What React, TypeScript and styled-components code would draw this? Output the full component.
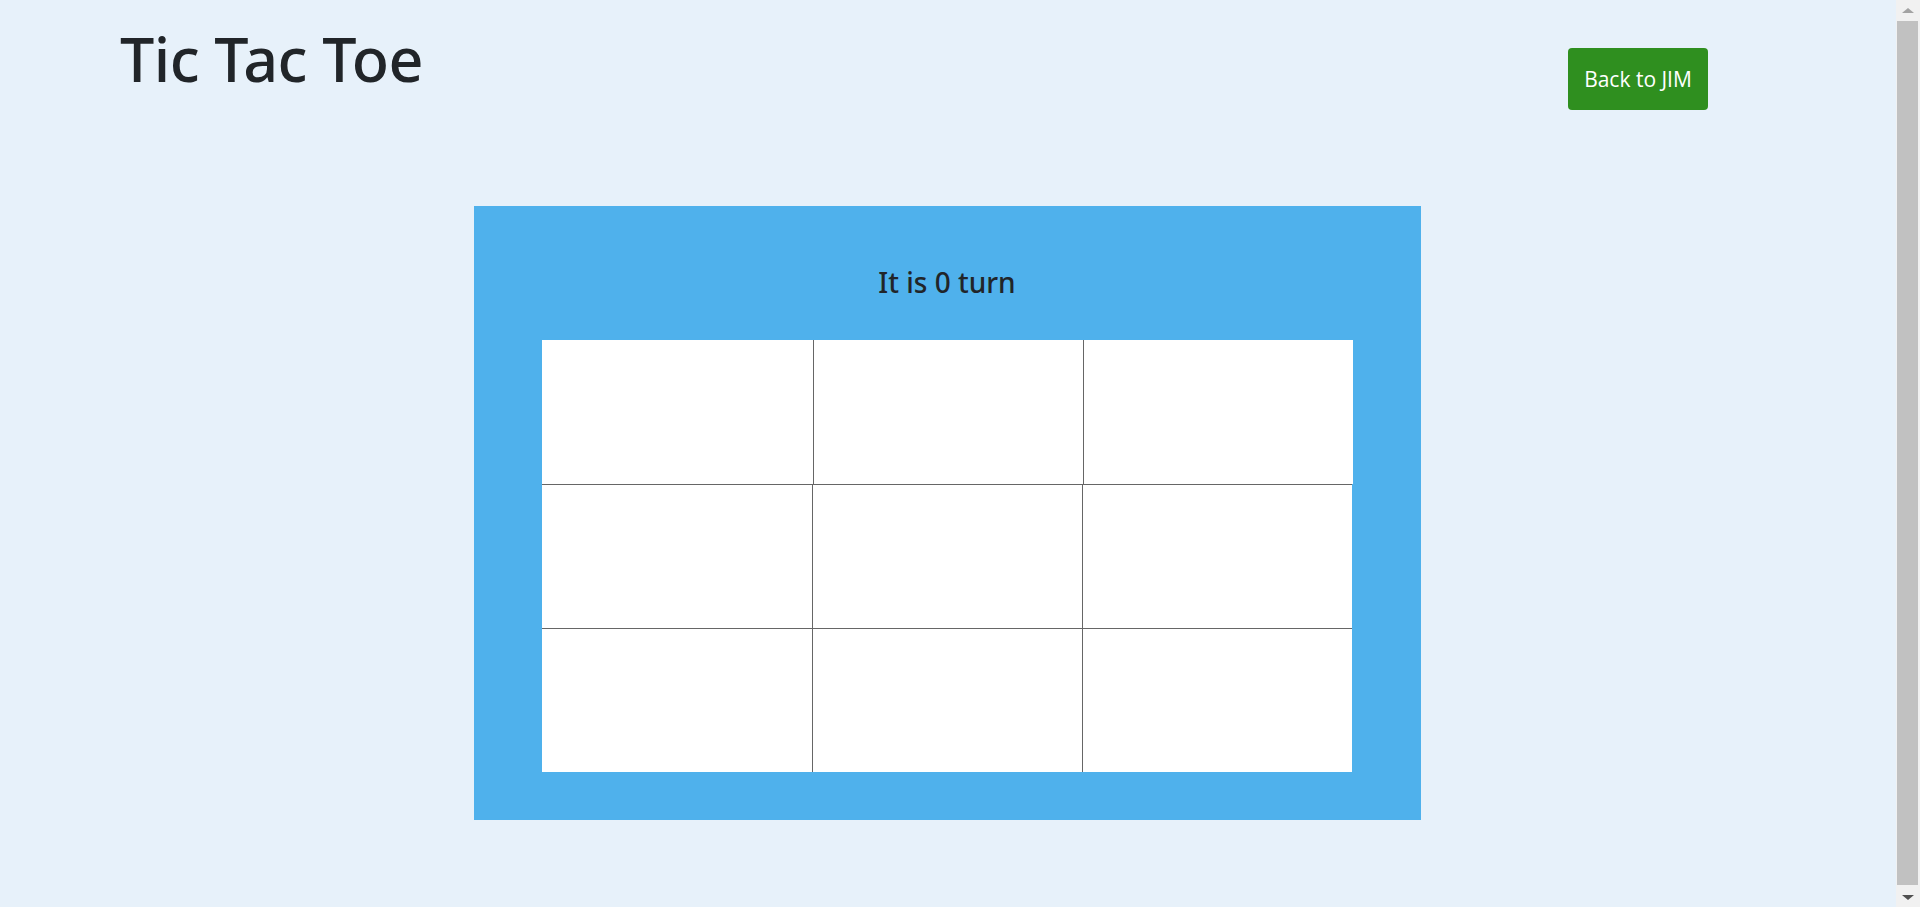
import React from "react";
import styled, { createGlobalStyle } from "styled-components";

const GlobalStyle = createGlobalStyle`
  html, body {
    margin: 0;
    padding: 0;
    background: #e7f1fa;
    overflow: hidden;
  }
  body {
    font-family: "Open Sans", "Noto Sans", sans-serif;
    color: #212529;
  }
`;

const Page = styled.div`
  width: 1896px;
  min-height: 1000px;
  display: flex;
  flex-direction: column;
`;

const Header = styled.header`
  display: flex;
  justify-content: space-between;
  align-items: flex-start;
  padding: 0 188px 0 120px;
  height: 206px;
`;

const Title = styled.h1`
  margin: 22px 0 0;
  font-family: "Noto Sans", "Open Sans", sans-serif;
  font-size: 61px;
  font-weight: 500;
  line-height: 1.2;
  letter-spacing: -0.55px;
  color: #212529;
`;

const BackButton = styled.button`
  margin-top: 48px;
  height: 62px;
  width: 140px;
  padding: 0;
  border: none;
  border-radius: 4px;
  background: #2f8f1f;
  color: #ffffff;
  font-family: "Open Sans", "Noto Sans", sans-serif;
  font-size: 21px;
  cursor: pointer;
`;

const Board = styled.section`
  margin-left: 474px;
  width: 947px;
  height: 614px;
  box-sizing: border-box;
  background: #4fb1ec;
  padding: 60px 69px 0 68px;
  display: flex;
  flex-direction: column;
  align-items: center;
`;

const Status = styled.h3`
  margin: 0 0 40px;
  font-family: "Noto Sans", "Open Sans", sans-serif;
  font-size: 28px;
  font-weight: 500;
  line-height: 1.2;
  color: #212529;
`;

const Grid = styled.div`
  width: 810px;
  display: flex;
  flex-direction: column;
  background: #ffffff;
`;

const Row = styled.div<{ $first?: boolean }>`
  display: flex;
  height: 144px;
  margin-left: ${(p) => (p.$first ? "1px" : "0")};
  margin-right: ${(p) => (p.$first ? "-1px" : "0")};
  & + & {
    border-top: 1px solid #666666;
    height: 143px;
  }
`;

const Cell = styled.button`
  flex: 0 0 270px;
  height: 100%;
  padding: 0;
  border: none;
  background: #ffffff;
  & + & {
    border-left: 1px solid #666666;
  }
`;

const Scrollbar = styled.div`
  position: fixed;
  top: 0;
  right: 0;
  width: 24px;
  height: 100vh;
  background: #f1f1f1;
  display: flex;
  flex-direction: column;
  align-items: center;
`;

const Arrow = styled.div<{ $down?: boolean }>`
  flex: 0 0 20px;
  display: flex;
  align-items: center;
  justify-content: center;
  &::before {
    content: "";
    width: 0;
    height: 0;
    border-left: 6px solid transparent;
    border-right: 6px solid transparent;
    ${(p) =>
      p.$down
        ? "border-top: 5px solid #505050;"
        : "border-bottom: 5px solid #a3a3a3;"}
  }
`;

const Thumb = styled.div`
  flex: 1;
  width: 21px;
  margin: 1px 0 2px 1px;
  background: #c1c1c1;
  align-self: flex-start;
`;

export default function App() {
  const rows = [0, 1, 2];
  return (
    <>
      <GlobalStyle />
      <Page>
        <Header>
          <Title>Tic Tac Toe</Title>
          <BackButton>Back to JIM</BackButton>
        </Header>
        <Board>
          <Status>It is 0 turn</Status>
          <Grid>
            {rows.map((r) => (
              <Row key={r} $first={r === 0}>
                {rows.map((c) => (
                  <Cell key={c} aria-label={`cell ${r * 3 + c}`} />
                ))}
              </Row>
            ))}
          </Grid>
        </Board>
      </Page>
      <Scrollbar>
        <Arrow />
        <Thumb />
        <Arrow $down />
      </Scrollbar>
    </>
  );
}
